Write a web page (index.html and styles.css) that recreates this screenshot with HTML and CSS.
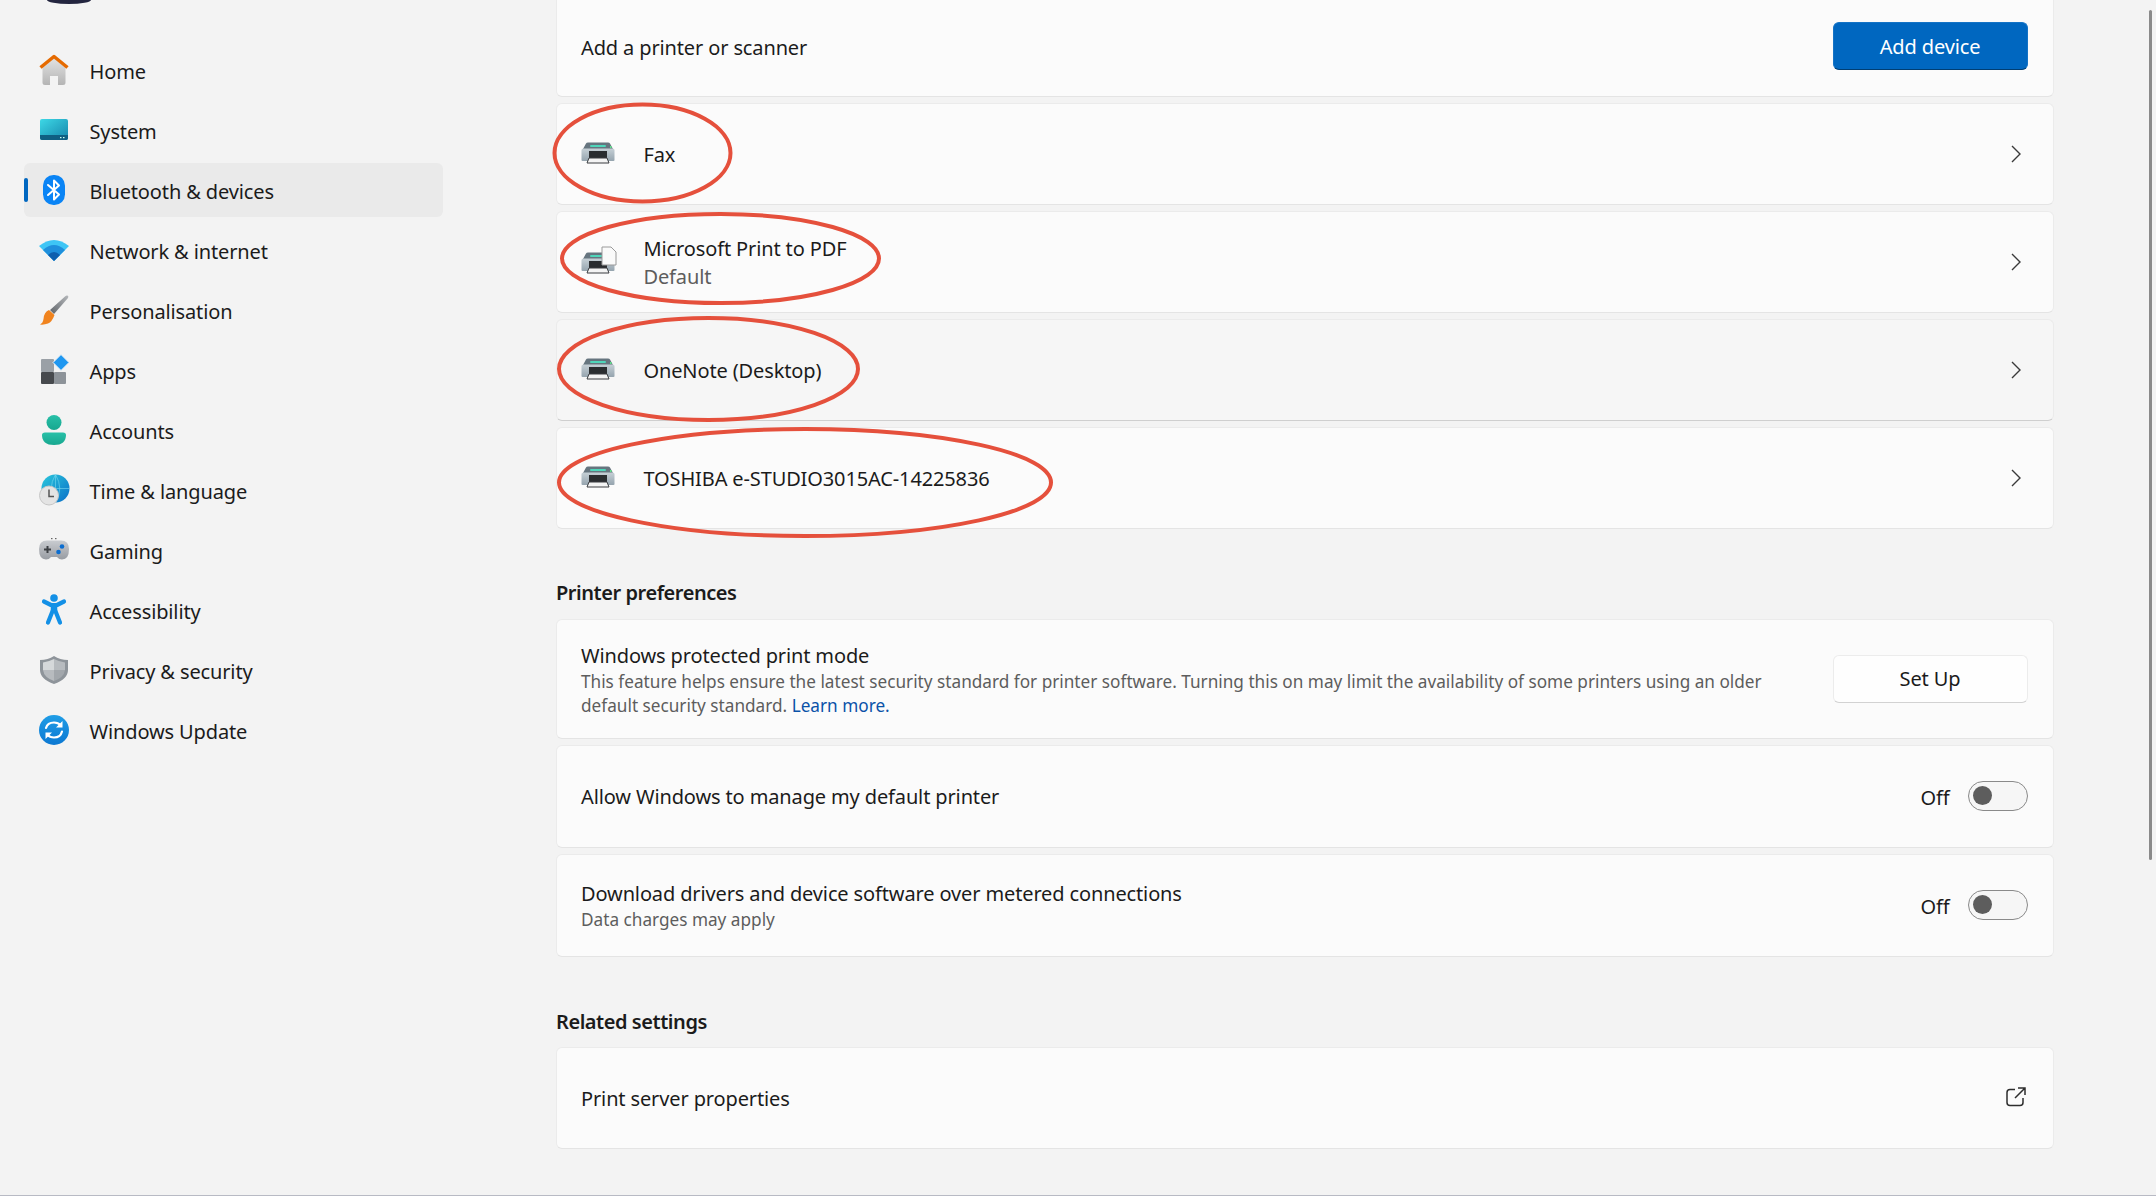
FILE: index.html
```html
<!DOCTYPE html>
<html lang="en-GB">
<head>
    <meta charset="UTF-8">
    <meta name="viewport" content="width=device-width, initial-scale=1.0">
    <title>Printers &amp; scanners</title>
    <link rel="stylesheet" href="styles.css">
</head>
<body>
    <svg class="defs" width="0" height="0">
        <defs>
            <linearGradient id="g-body" x1="0" y1="0" x2="0" y2="1"><stop offset="0" stop-color="#c6d0d6"/><stop offset="1" stop-color="#95a4ae"/></linearGradient>
            <linearGradient id="g-home" x1="0" y1="0" x2="0" y2="1"><stop offset="0" stop-color="#e2e2e2"/><stop offset="1" stop-color="#b4b4b4"/></linearGradient>
            <linearGradient id="g-system" x1="0" y1="0" x2="1" y2="1"><stop offset="0" stop-color="#3dd8e6"/><stop offset="1" stop-color="#1585ab"/></linearGradient>
            <linearGradient id="g-brush" x1="0" y1="1" x2="1" y2="0"><stop offset="0" stop-color="#5f6368"/><stop offset="1" stop-color="#b5b8bb"/></linearGradient>
            <linearGradient id="g-person" x1="0" y1="0" x2="0" y2="1"><stop offset="0" stop-color="#28c0a8"/><stop offset="1" stop-color="#17a78f"/></linearGradient>
            <linearGradient id="g-globe" x1="0" y1="0" x2="1" y2="1"><stop offset="0" stop-color="#2bc8dc"/><stop offset="1" stop-color="#0a6fc8"/></linearGradient>
            <linearGradient id="g-pad" x1="0" y1="0" x2="0" y2="1"><stop offset="0" stop-color="#c9ccd0"/><stop offset="1" stop-color="#989ca2"/></linearGradient>
            <linearGradient id="g-update" x1="0" y1="0" x2="0" y2="1"><stop offset="0" stop-color="#1f9de6"/><stop offset="1" stop-color="#0c78d2"/></linearGradient>
            <symbol id="printer" viewBox="0 0 34 22">
                <path d="M2 7 L5 1.500 Q5.500 .5 7 .5 H27 Q28.500 .5 29 1.500 L32 7 Z" fill="#66757f"/>
                <rect x="9" y="3" width="16" height="2" rx="1" fill="#4fd6ba"/>
                <rect x="29" y="4" width="1.500" height="2" fill="#5fe08a"/>
                <path d="M.5 8 Q.5 6.500 2.500 6.500 H31.500 Q33.500 6.500 33.500 8 V18 Q33.500 19 32.500 19 H1.500 Q.5 19 .5 18 Z" fill="url(#g-body)"/>
                <rect x="8" y="9" width="18" height="7" fill="#2a2d30"/>
                <path d="M8 16 H26 L28 21 H6 Z" fill="#f4f4f4" stroke="#3a3d40" stroke-width="1"/>
            </symbol>
        </defs>
    </svg>

    <div class="window">
        <aside class="sidebar">
            <div class="avatar-edge"></div>
            <nav class="nav-list">
                <a class="nav-item">
                    <svg class="nav-icon" viewBox="0 0 32 32"><path d="M4.500 14 L16 4 L27.500 14 V28.500 Q27.500 31 25 31 H20 V22 H12 V31 H7 Q4.500 31 4.500 28.500 Z" fill="url(#g-home)"/><path d="M2.500 13.500 L16 2.500 L29.500 13.500" fill="none" stroke="#e56a00" stroke-width="3.500" stroke-linejoin="round"/></svg>
                    <span>Home</span>
                </a>
                <a class="nav-item">
                    <svg class="nav-icon" viewBox="0 0 32 32"><rect x="2" y="5" width="28" height="21" rx="2" fill="url(#g-system)"/><path d="M2 21 H30 V24 Q30 26 28 26 H4 Q2 26 2 24 Z" fill="#0f5f82"/><rect x="22" y="23" width="1.500" height="1.200" fill="#cfe"/><rect x="25" y="23" width="1.500" height="1.200" fill="#cfe"/></svg>
                    <span>System</span>
                </a>
                <a class="nav-item is-active">
                    <svg class="nav-icon" viewBox="0 0 32 32"><rect x="5" y="1" width="22" height="30" rx="10.500" fill="#0a84f5"/><path d="M10 11 L21 20.500 L16 25.500 V6.500 L21 11.500 L10 21" fill="none" stroke="#fff" stroke-width="2" stroke-linejoin="round" stroke-linecap="round"/></svg>
                    <span>Bluetooth &amp; devices</span>
                </a>
                <a class="nav-item">
                    <svg class="nav-icon" viewBox="0 0 32 32"><path d="M1 12 Q16 0 31 12 L16 27 Z" fill="#3ec5f5"/><path d="M5 16 Q16 6 27 16 L16 27 Z" fill="#1f8fdc"/><path d="M10 21 Q16 15 22 21 L16 27 Z" fill="#0f5fae"/></svg>
                    <span>Network &amp; internet</span>
                </a>
                <a class="nav-item">
                    <svg class="nav-icon" viewBox="0 0 32 32"><path d="M29.500 1.500 Q31 2 30 4 L16 20 L12 16 L27 2.500 Q28.500 1 29.500 1.500 Z" fill="url(#g-brush)"/><path d="M11 16 L16.500 21 Q14 28 10 29.500 Q6 31 2 30.500 Q5 29 5.500 25 Q6 18 11 16 Z" fill="#f0831e"/></svg>
                    <span>Personalisation</span>
                </a>
                <a class="nav-item">
                    <svg class="nav-icon" viewBox="0 0 32 32"><rect x="3" y="5" width="13" height="13" rx="1" fill="#9aa0a6"/><rect x="3" y="18" width="13" height="12" rx="1" fill="#46494d"/><rect x="16" y="18" width="12" height="12" rx="1" fill="#8d9399"/><path d="M23 0.500 L31 8.500 L23 16.500 L15 8.500 Z" fill="#1f97f0" stroke="#f3f3f3" stroke-width="1"/></svg>
                    <span>Apps</span>
                </a>
                <a class="nav-item">
                    <svg class="nav-icon" viewBox="0 0 32 32"><circle cx="16" cy="8.500" r="7.500" fill="url(#g-person)"/><path d="M4 21 Q4 18.500 7 18.500 H25 Q28 18.500 28 21 Q28 31 16 31 Q4 31 4 21 Z" fill="url(#g-person)"/></svg>
                    <span>Accounts</span>
                </a>
                <a class="nav-item">
                    <svg class="nav-icon" viewBox="0 0 32 32"><circle cx="17.500" cy="14.500" r="14" fill="url(#g-globe)"/><path d="M17.500 .5 V28.500 M3.500 14.500 H31.500 M17.500 .5 Q9 14.500 17.500 28.500 M17.500 .5 Q26 14.500 17.500 28.500" fill="none" stroke="#7fdcf0" stroke-width=".8" opacity=".7"/><circle cx="11" cy="21.500" r="9.500" fill="#e4e4e4" stroke="#c6c6c6"/><path d="M11 15.500 V22.500 H16" fill="none" stroke="#555" stroke-width="1.500"/></svg>
                    <span>Time &amp; language</span>
                </a>
                <a class="nav-item">
                    <svg class="nav-icon" viewBox="0 0 32 32"><path d="M9 6.500 H23 Q31 6.500 31 15 Q31 25.500 24 25.500 Q21 25.500 19 23 H13 Q11 25.500 8 25.500 Q1 25.500 1 15 Q1 6.500 9 6.500 Z" fill="url(#g-pad)"/><path d="M9.500 12 V19 M6 15.500 H13" stroke="#3d4044" stroke-width="2"/><circle cx="24" cy="12.500" r="2.300" fill="#0c6ed0"/><circle cx="20.500" cy="18" r="2.300" fill="#0c6ed0"/><rect x="13" y="4" width="1.500" height="1.200" fill="#666"/><rect x="17" y="4" width="1.500" height="1.200" fill="#666"/></svg>
                    <span>Gaming</span>
                </a>
                <a class="nav-item">
                    <svg class="nav-icon" viewBox="0 0 32 32"><circle cx="16" cy="4" r="3.800" fill="#1390e6"/><path d="M6 7.500 L13 11 H19 L26 7.500 M15 16 L10 28.500 M17 16 L22 28.500" fill="none" stroke="#1390e6" stroke-width="4.200" stroke-linecap="round" stroke-linejoin="round"/><path d="M12.500 10 H19.500 L19 19 H13 Z" fill="#1390e6"/></svg>
                    <span>Accessibility</span>
                </a>
                <a class="nav-item">
                    <svg class="nav-icon" viewBox="0 0 32 32"><path d="M16 2 Q22 6 30 6 V16 Q30 25 16 30 Q2 25 2 16 V6 Q10 6 16 2 Z" fill="#8e949a"/><path d="M16 5 Q10 8 5 8.500 V16 H16 Z" fill="#d5d8da"/><path d="M16 5 Q22 8 27 8.500 V16 H16 Z" fill="#b7bbbf"/><path d="M5 16 H16 V27 Q6 23.500 5 16 Z" fill="#b7bbbf"/><path d="M27 16 H16 V27 Q26 23.500 27 16 Z" fill="#a2a7ac"/></svg>
                    <span>Privacy &amp; security</span>
                </a>
                <a class="nav-item">
                    <svg class="nav-icon" viewBox="0 0 32 32"><circle cx="16" cy="16" r="15" fill="url(#g-update)"/><path d="M8 14 Q9.500 8.500 16 8.500 Q20 8.500 23 11.500 M24 17.500 Q22.500 23.500 16 23.500 Q12 23.500 9 20.500" fill="none" stroke="#fff" stroke-width="2.200" stroke-linecap="round"/><path d="M24.500 7 V13.500 H18 Z M7.500 25 V18.500 H14 Z" fill="#fff"/></svg>
                    <span>Windows Update</span>
                </a>
            </nav>
        </aside>

        <main class="content">
            <div class="card-group">
                <div class="card card-first">
                    <div class="card-text"><div class="card-title">Add a printer or scanner</div></div>
                    <button class="btn btn-primary">Add device</button>
                </div>
                <div class="card">
                    <svg class="printer-icon"><use href="#printer"/></svg>
                    <div class="card-text"><div class="card-title">Fax</div></div>
                    <svg class="chevron" viewBox="0 0 10 18"><path d="M1 1 L9 9 L1 17" fill="none" stroke="#3a3a3a" stroke-width="1.400"/></svg>
                </div>
                <div class="card">
                    <svg class="printer-icon printer-pdf" viewBox="0 0 36 28">
                        <use href="#printer" x="0" y="6" width="34" height="22"/>
                        <path d="M21 1 H30 L35 6 V19 H21 Z" fill="#fafafa" stroke="#9a9a9a" stroke-width="1"/>
                    </svg>
                    <div class="card-text">
                        <div class="card-title">Microsoft Print to PDF</div>
                        <div class="card-default">Default</div>
                    </div>
                    <svg class="chevron" viewBox="0 0 10 18"><path d="M1 1 L9 9 L1 17" fill="none" stroke="#3a3a3a" stroke-width="1.400"/></svg>
                </div>
                <div class="card card-hover">
                    <svg class="printer-icon"><use href="#printer"/></svg>
                    <div class="card-text"><div class="card-title">OneNote (Desktop)</div></div>
                    <svg class="chevron" viewBox="0 0 10 18"><path d="M1 1 L9 9 L1 17" fill="none" stroke="#3a3a3a" stroke-width="1.400"/></svg>
                </div>
                <div class="card">
                    <svg class="printer-icon"><use href="#printer"/></svg>
                    <div class="card-text"><div class="card-title">TOSHIBA e-STUDIO3015AC-14225836</div></div>
                    <svg class="chevron" viewBox="0 0 10 18"><path d="M1 1 L9 9 L1 17" fill="none" stroke="#3a3a3a" stroke-width="1.400"/></svg>
                </div>
            </div>

            <h2 class="section-title">Printer preferences</h2>
            <div class="card-group card-group-prefs">
                <div class="card card-tall">
                    <div class="card-text">
                        <div class="card-title">Windows protected print mode</div>
                        <div class="card-desc">This feature helps ensure the latest security standard for printer software. Turning this on may limit the availability of some printers using an older<br>default security standard. <a class="link">Learn more.</a></div>
                    </div>
                    <button class="btn btn-plain">Set Up</button>
                </div>
                <div class="card card-pref">
                    <div class="card-text"><div class="card-title">Allow Windows to manage my default printer</div></div>
                    <span class="toggle-label">Off</span>
                    <span class="toggle"></span>
                </div>
                <div class="card card-pref">
                    <div class="card-text">
                        <div class="card-title">Download drivers and device software over metered connections</div>
                        <div class="card-desc">Data charges may apply</div>
                    </div>
                    <span class="toggle-label">Off</span>
                    <span class="toggle"></span>
                </div>
            </div>

            <h2 class="section-title section-related">Related settings</h2>
            <div class="card-group">
                <div class="card">
                    <div class="card-text"><div class="card-title">Print server properties</div></div>
                    <svg class="open-icon" viewBox="0 0 20 20"><path d="M9 2.500 H4 Q1 2.500 1 5.500 V15.500 Q1 18.500 4 18.500 H14 Q17 18.500 17 15.500 V11" fill="none" stroke="#2e2e2e" stroke-width="1.500"/><path d="M9 11 L18.500 1.500 M12 1 H19 V8" fill="none" stroke="#2e2e2e" stroke-width="1.500"/></svg>
                </div>
            </div>
        </main>
    </div>
    <div class="bottom-line"></div>

    <div class="scrollbar"></div>

    <!-- red hand-drawn rings round the printers -->
    <svg class="rings" viewBox="0 0 2156 1196">
        <ellipse cx="642.500" cy="153" rx="88" ry="48.500"/>
        <ellipse cx="720.500" cy="258.500" rx="158.500" ry="44.500"/>
        <ellipse cx="708.500" cy="369" rx="149.500" ry="51"/>
        <ellipse cx="805" cy="482.500" rx="246" ry="53.500"/>
    </svg>
</body>
</html>
```

FILE: styles.css
```css
html, body {
    margin: 0;
    padding: 0;
    height: 100%;
    overflow: hidden;
}

body {
    position: relative;
    display: flex;
    flex-direction: column;
    height: 1196px;
    background: #f3f3f3;
    color: #1b1b1b;
    font-family: "Noto Sans", "Open Sans", Arial, sans-serif;
    font-size: 20px;
    letter-spacing: -0.13px;
}

.defs {
    position: absolute;
}

.window {
    flex: 1;
    display: flex;
    min-height: 0;
}

.bottom-line {
    height: 1px;
    background: #b8bac4;
}

/* sidebar */
.sidebar {
    width: 556px;
    flex-shrink: 0;
    padding-left: 24px;
    box-sizing: border-box;
}

.avatar-edge {
    width: 44px;
    height: 4px;
    margin-left: 23px;
    margin-bottom: 39px;
    background: #23253f;
    border-radius: 0 0 22px 22px / 0 0 4px 4px;
}

.nav-list {
    display: flex;
    flex-direction: column;
    gap: 6px;
    width: 419px;
}

.nav-item {
    position: relative;
    display: flex;
    align-items: center;
    height: 54px;
    padding-left: 14px;
    gap: 19.5px;
    border-radius: 6px;
}

.nav-item span {
    padding-top: 3px;
}

.nav-item.is-active {
    background: #eaeaea;
}

.nav-item.is-active::before {
    content: "";
    position: absolute;
    left: 0;
    top: 15px;
    width: 4px;
    height: 24px;
    border-radius: 2px;
    background: #0067c0;
}

.nav-icon {
    width: 32px;
    height: 32px;
    flex-shrink: 0;
}

/* content */
.content {
    flex: 1;
    padding-right: 102px;
    min-width: 0;
}

.card-group {
    display: flex;
    flex-direction: column;
    gap: 6px;
}

.card-group-prefs {
    gap: 6.5px;
}

.card {
    display: flex;
    align-items: center;
    height: 102px;
    box-sizing: border-box;
    padding: 0 25.5px 0 24px;
    background: #fbfbfb;
    border: 1px solid #ebebeb;
    border-bottom-color: #e4e4e4;
    border-radius: 6px;
}

.card-first {
    height: 97px;
    padding-bottom: 4px;
    border-top: none;
    border-radius: 0 0 6px 6px;
}

.card-first .card-text {
    padding-top: 4px;
}

.card-hover {
    background: #f6f6f6;
    border-bottom-color: #cfcfcf;
}

.card-tall {
    height: 119.5px;
}

.card-pref {
    height: 102.5px;
}

.card-text {
    flex: 1;
    min-width: 0;
    padding-top: 2px;
}

.card-title {
    line-height: 28px;
}

.card-default {
    line-height: 28px;
    color: #5d5d5d;
}

.card-desc {
    font-size: 17.2px;
    letter-spacing: 0;
    line-height: 24px;
    color: #5d5d5d;
}

.link {
    color: #0a52a8;
}

.printer-icon {
    width: 34px;
    height: 22px;
    margin-right: 28.5px;
    margin-top: -3px;
    flex-shrink: 0;
}

.printer-pdf {
    width: 36px;
    height: 28px;
    margin-right: 26.5px;
    margin-top: -4px;
}

.chevron {
    width: 10px;
    height: 18px;
    margin-right: 6.5px;
    flex-shrink: 0;
}

.open-icon {
    width: 20px;
    height: 20px;
    margin-right: 2px;
    margin-top: -2px;
}

.btn {
    height: 48px;
    width: 195px;
    font: inherit;
    letter-spacing: inherit;
    border-radius: 6px;
    flex-shrink: 0;
}

.btn-primary {
    background: #0067c0;
    color: #fff;
    border: 1px solid #1473c6;
    border-bottom-color: #003e73;
}

.btn-plain {
    background: #fefefe;
    color: #1b1b1b;
    border: 1px solid #ececec;
    border-bottom-color: #d2d2d2;
}

.section-title {
    margin: 50px 0 12px;
    font-size: 20px;
    font-weight: 600;
    letter-spacing: -0.45px;
    line-height: 28px;
}

.section-related {
    margin: 51px 0 11.5px;
}

.toggle-label {
    margin-right: 18px;
    padding-top: 2px;
}

.toggle {
    position: relative;
    width: 60px;
    height: 30px;
    box-sizing: border-box;
    background: #f6f6f6;
    border: 1.5px solid #8a8a8a;
    border-radius: 15px;
    flex-shrink: 0;
}

.toggle::after {
    content: "";
    position: absolute;
    left: 4px;
    top: 4px;
    width: 19px;
    height: 19px;
    border-radius: 50%;
    background: #5d5d5d;
}

/* overlays */
.scrollbar {
    position: absolute;
    top: 10px;
    right: 4px;
    width: 3px;
    height: 850px;
    border-radius: 2px;
    background: #8a8a8a;
}

.rings {
    position: absolute;
    left: 0;
    top: 0;
    width: 2156px;
    height: 1196px;
    pointer-events: none;
}

.rings ellipse {
    fill: none;
    stroke: #e5503c;
    stroke-width: 4;
}
```
